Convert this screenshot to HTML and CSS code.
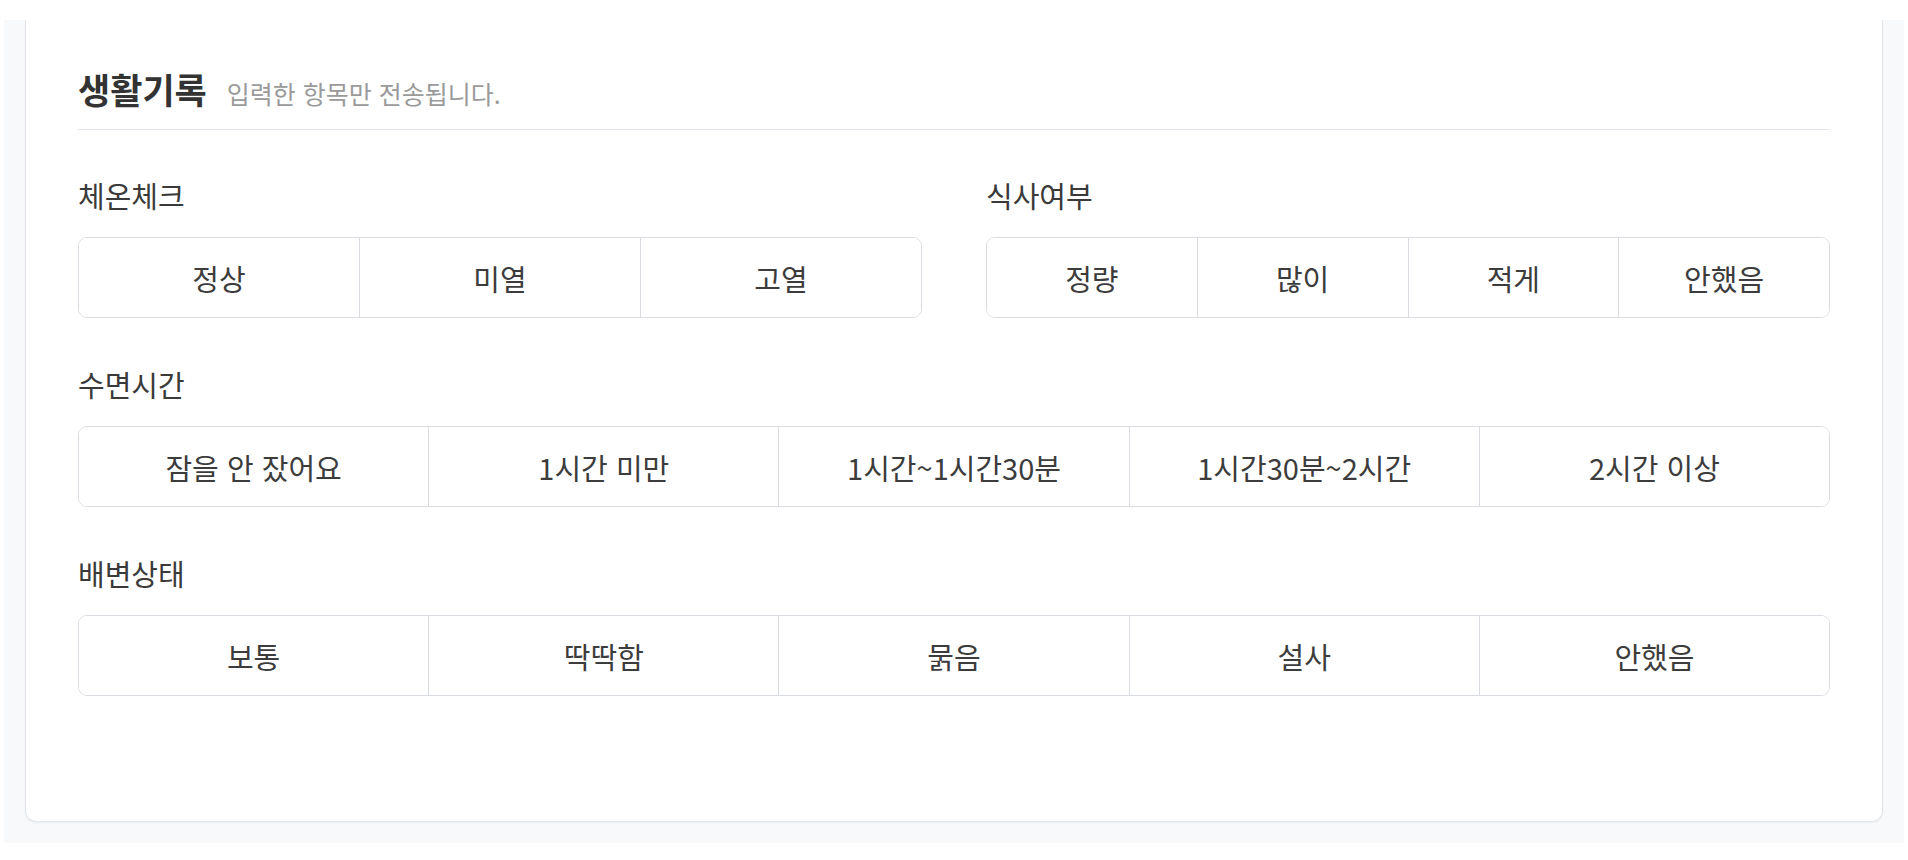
FILE: index.html
```html
<!DOCTYPE html>
<html lang="ko">
<head>
<meta charset="utf-8">
<title>생활기록</title>
<link rel="stylesheet" href="styles.css">
</head>
<body>
<div class="viewport">
  <section class="card">
    <header class="card-head">
      <h2 class="title">생활기록</h2>
      <span class="subtitle">입력한 항목만 전송됩니다.</span>
    </header>

    <div class="grid-2">
      <div class="field">
        <div class="label">체온체크</div>
        <div class="seg">
          <button class="seg-btn">정상</button>
          <button class="seg-btn">미열</button>
          <button class="seg-btn">고열</button>
        </div>
      </div>
      <div class="field">
        <div class="label">식사여부</div>
        <div class="seg">
          <button class="seg-btn">정량</button>
          <button class="seg-btn">많이</button>
          <button class="seg-btn">적게</button>
          <button class="seg-btn">안했음</button>
        </div>
      </div>
    </div>

    <div class="field">
      <div class="label">수면시간</div>
      <div class="seg">
        <button class="seg-btn">잠을 안 잤어요</button>
        <button class="seg-btn">1시간 미만</button>
        <button class="seg-btn">1시간~1시간30분</button>
        <button class="seg-btn">1시간30분~2시간</button>
        <button class="seg-btn">2시간 이상</button>
      </div>
    </div>

    <div class="field">
      <div class="label">배변상태</div>
      <div class="seg">
        <button class="seg-btn">보통</button>
        <button class="seg-btn">딱딱함</button>
        <button class="seg-btn">묽음</button>
        <button class="seg-btn">설사</button>
        <button class="seg-btn">안했음</button>
      </div>
    </div>
  </section>
</div>
</body>
</html>
```

FILE: styles.css
```css
* { box-sizing: border-box; }

html, body {
  margin: 0;
  padding: 0;
  background: #ffffff;
  font-family: "Noto Sans CJK KR", "Noto Sans", sans-serif;
  color: #333333;
}

.viewport {
  margin: 20px 4px 0 4px;
  height: 823px;
  background: #f8f9fa;
  padding: 0 21px 0 21px;
  overflow: hidden;
}

.card {
  background: #ffffff;
  border: 1px solid #e3e6ea;
  border-top: none;
  border-radius: 0 0 11px 11px;
  box-shadow: 0 1px 2px rgba(0, 0, 0, 0.05);
  padding: 47px 52px 125px 52px;
  display: flex;
  flex-direction: column;
  gap: 48px;
}

.card-head {
  display: flex;
  align-items: baseline;
  gap: 20px;
  padding-bottom: 18px;
  border-bottom: 1px solid #e3e6ea;
  margin-bottom: -1px;
}

.title {
  margin: 0;
  font-size: 35px;
  line-height: 44px;
  font-weight: 700;
  color: #333333;
}

.subtitle {
  font-size: 25px;
  color: #9a9a9a;
}

.grid-2 {
  display: grid;
  grid-template-columns: 1fr 1fr;
  gap: 64px;
}

.label {
  font-size: 29px;
  line-height: 36px;
  color: #3a3a3a;
  margin-bottom: 24px;
}

.seg {
  display: flex;
  height: 81px;
  border: 1px solid #d9dde1;
  border-radius: 9px;
  overflow: hidden;
}

.seg-btn {
  flex: 1 1 0;
  min-width: 0;
  margin: 0;
  padding: 0;
  border: none;
  border-left: 1px solid #d9dde1;
  background: #ffffff;
  font-family: inherit;
  font-size: 29px;
  color: #3c3c3c;
  cursor: pointer;
}

.seg-btn:first-child {
  border-left: none;
}
```
